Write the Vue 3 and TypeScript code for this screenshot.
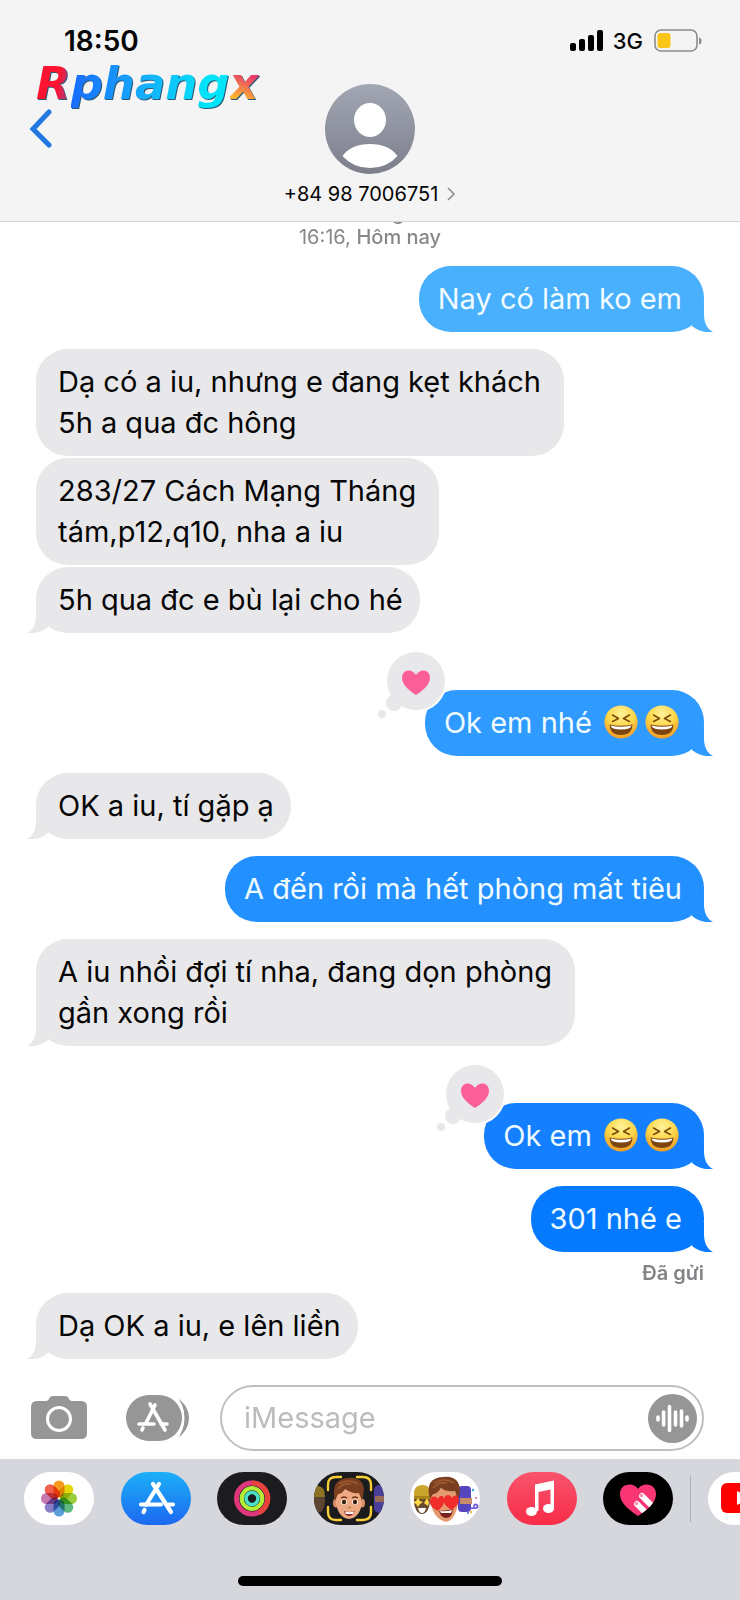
<script setup lang="ts">
import { ref } from 'vue'

interface Message {
  from: 'me' | 'them'
  lines: string[]
  tone?: string
  laughs?: number
  tail?: boolean
  loved?: boolean
  grouped?: boolean
  note?: string
}

const draft = ref('')

const messages: Message[] = [
  { from: 'me', lines: ['Nay có làm ko em'], tone: 'tone-1', tail: true },
  { from: 'them', lines: ['Dạ có a iu, nhưng e đang kẹt khách', '5h a qua đc hông'] },
  { from: 'them', lines: ['283/27 Cách Mạng Tháng', 'tám,p12,q10, nha a iu'], grouped: true },
  { from: 'them', lines: ['5h qua đc e bù lại cho hé'], grouped: true, tail: true },
  { from: 'me', lines: ['Ok em nhé '], laughs: 2, tone: 'tone-2', tail: true, loved: true },
  { from: 'them', lines: ['OK a iu, tí gặp ạ'], tail: true },
  { from: 'me', lines: ['A đến rồi mà hết phòng mất tiêu'], tone: 'tone-3', tail: true },
  { from: 'them', lines: ['A iu nhồi đợi tí nha, đang dọn phòng', 'gần xong rồi'], tail: true },
  { from: 'me', lines: ['Ok em '], laughs: 2, tone: 'tone-4', tail: true, loved: true },
  { from: 'me', lines: ['301 nhé e'], tone: 'tone-5', tail: true, note: 'Đã gửi' },
  { from: 'them', lines: ['Dạ OK a iu, e lên liền'], tail: true },
]

const petals = ['#f79a1c', '#e6d80c', '#9bcc3c', '#5cb87c', '#5a9fd8', '#8a7fc8', '#c878b0', '#f0604c']
</script>

<template>
  <div class="phone">
    <header class="top">
      <div class="status">
        <time class="clock">18:50</time>
        <div class="radio">
          <svg class="bars" viewBox="0 0 33 22" aria-hidden="true">
            <rect x="0" y="13" width="6" height="8" rx="2" />
            <rect x="9" y="9" width="6" height="12" rx="2" />
            <rect x="18" y="5" width="6" height="16" rx="2" />
            <rect x="27" y="0" width="6" height="21" rx="2" />
          </svg>
          <span class="network">3G</span>
          <svg class="battery" viewBox="0 0 48 24" aria-hidden="true">
            <rect x="1" y="1" width="42" height="21" rx="6" fill="none" stroke="#8b8b86" stroke-width="1.6" />
            <rect x="3.5" y="4" width="13" height="15" rx="3" fill="#fac515" />
            <path d="M45 8.5 Q47.5 9 47.5 12 Q47.5 15 45 15.5 Z" fill="#8b8b86" />
          </svg>
        </div>
      </div>
      <div class="watermark"><span class="w-red">R</span><span class="w-blue">phang</span><span class="w-sun">x</span></div>
      <div class="nav">
        <button class="back" type="button" aria-label="Back">
          <svg viewBox="0 0 24 40"><path d="M20 3 L4 20 L20 36" fill="none" stroke="#2078e0" stroke-width="5" stroke-linecap="round" stroke-linejoin="miter" /></svg>
        </button>
        <button class="contact" type="button">
          <svg class="avatar" viewBox="0 0 90 90" aria-hidden="true">
            <defs>
              <linearGradient id="avatarFill" x1="0" y1="0" x2="0" y2="1">
                <stop offset="0" stop-color="#a3a7b4" />
                <stop offset="1" stop-color="#7c7f8b" />
              </linearGradient>
            </defs>
            <circle cx="45" cy="45" r="45" fill="url(#avatarFill)" />
            <ellipse cx="45" cy="36" rx="16" ry="17" fill="#fff" />
            <path d="M17.5 72 Q26 60 45 60 Q64 60 72.5 72 Q62 84 45 84 Q28 84 17.5 72 Z" fill="#fff" />
          </svg>
          <span class="number">+84 98 7006751
            <svg viewBox="0 0 10 16" aria-hidden="true"><path d="M2 2 L8 8 L2 14" fill="none" stroke="#8d8d92" stroke-width="1.6" /></svg>
          </span>
        </button>
      </div>
    </header>

    <main class="thread">
      <p class="stamp"><b>iMessage</b><br />16:16, <b>Hôm nay</b></p>
      <div
        v-for="(m, i) in messages"
        :key="i"
        class="row"
        :class="[m.from, { grouped: m.grouped, loved: m.loved }]"
      >
        <div class="bubble" :class="[m.tone, { multi: m.lines.length > 1 }]">
          <span v-for="line in m.lines" :key="line" class="line">{{ line }}<svg
              v-for="n in m.laughs ?? 0"
              :key="n"
              class="laugh"
              viewBox="0 0 34 34"
              role="img"
              aria-label="laughing"
            >
              <defs>
                <radialGradient id="face" cx=".5" cy=".25" r=".8">
                  <stop offset="0" stop-color="#fff39a" />
                  <stop offset=".5" stop-color="#fdd648" />
                  <stop offset="1" stop-color="#ee9220" />
                </radialGradient>
              </defs>
              <circle cx="17" cy="17" r="16.6" fill="url(#face)" />
              <path d="M8.5 10 L14.5 13.5 L8.5 16.5 M25.5 10 L19.5 13.5 L25.5 16.5" fill="none" stroke="#7a4a08" stroke-width="1.5" stroke-linecap="round" stroke-linejoin="round" />
              <path d="M5.5 19.5 Q17 22 28.5 19.5 Q28 30 17 30 Q6 30 5.5 19.5 Z" fill="#7c4410" />
              <path d="M6.5 20.5 Q17 23 27.5 20.5 Q27 24.5 17 24.5 Q7 24.5 6.5 20.5 Z" fill="#fff" />
            </svg></span>
          <svg v-if="m.tail" class="tail" viewBox="0 0 24 30" aria-hidden="true">
            <path d="M5 0 H15 V12 C15 21 18 27 24 30 C17 31 9 29 3 24 Z" />
          </svg>
          <svg v-if="m.loved" class="tapback" viewBox="0 0 72 68" role="img" aria-label="loved">
            <circle cx="41" cy="31" r="31" fill="#fff" />
            <circle cx="41" cy="31" r="29" fill="#e8e8ea" />
            <circle cx="19" cy="53" r="8" fill="#e8e8ea" />
            <circle cx="7" cy="64" r="4" fill="#e8e8ea" />
            <path d="M41 45 C35 41 27 35 27 28 C27 19 37 18 41 25 C45 18 55 19 55 28 C55 35 47 41 41 45 Z" fill="#fb5f98" />
          </svg>
        </div>
        <small v-if="m.note" class="note">{{ m.note }}</small>
      </div>
    </main>

    <form class="composer" @submit.prevent>
      <button class="tool camera" type="button" aria-label="Camera">
        <svg viewBox="0 0 56 44">
          <path d="M6 5 H15 Q17 5 18 3 Q19 0 22 0 H34 Q37 0 38 3 Q39 5 41 5 H50 Q56 5 56 11 V37 Q56 43 50 43 H6 Q0 43 0 37 V11 Q0 5 6 5 Z" fill="#969696" />
          <circle cx="28" cy="23" r="11.5" fill="none" stroke="#fff" stroke-width="3" />
        </svg>
      </button>
      <button class="tool apps" type="button" aria-label="Apps">
        <svg viewBox="0 0 63 46">
          <rect width="56" height="46" rx="23" fill="#969696" />
          <path d="M50 2 Q58 10 58 23 Q58 36 50 44 Q63 36 63 23 Q63 10 50 2 Z" fill="#969696" />
          <path d="M49 1 Q57.5 10 57.5 23 Q57.5 36 49 45" fill="none" stroke="#fff" stroke-width="2" />
          <path d="M29 10 L20 28 M24 9 L39 35 M13 29 H28 M35 29 H41 M17 33 L16 35" fill="none" stroke="#fff" stroke-width="3.6" stroke-linecap="round" />
        </svg>
      </button>
      <div class="field">
        <input v-model="draft" type="text" placeholder="iMessage" aria-label="iMessage" />
        <button class="voice" type="button" aria-label="Audio message">
          <svg viewBox="0 0 49 49">
            <circle cx="24.5" cy="24.5" r="24.5" fill="#969696" />
            <path d="M10 23 V26 M15.6 18 V31 M21.5 12.5 V36.5 M27.5 18 V31 M33.5 17 V32 M39 23 V26" stroke="#fff" stroke-width="3.6" stroke-linecap="round" />
          </svg>
        </button>
      </div>
    </form>

    <footer class="drawer">
      <nav class="strip" aria-label="iMessage apps">
        <div class="pills">
          <button class="pill white" type="button" aria-label="Photos">
            <svg viewBox="0 0 70 53">
              <g class="petals">
                <rect
                  v-for="(c, i) in petals"
                  :key="c"
                  x="29.5"
                  y="8.5"
                  width="11"
                  height="17"
                  rx="5.5"
                  :fill="c"
                  :transform="`rotate(${i * 45} 35 26.5)`"
                />
              </g>
            </svg>
          </button>
          <button class="pill store" type="button" aria-label="App Store">
            <svg viewBox="0 0 70 53">
              <path d="M38 12 L25 33 M32 12 L50 40 M20 32.5 H40 M47 32.5 H52 M23.5 38 L22.5 40" fill="none" stroke="#fff" stroke-width="4.2" stroke-linecap="round" />
            </svg>
          </button>
          <button class="pill dark" type="button" aria-label="Activity">
            <svg viewBox="0 0 70 53" fill="none">
              <circle cx="35" cy="26.5" r="15.5" stroke="#e0367c" stroke-width="5" />
              <path d="M35 11 A15.5 15.5 0 0 1 42 40.5" stroke="#e9443c" stroke-width="5" />
              <circle cx="35" cy="26.5" r="10.3" stroke="#b4ec3a" stroke-width="4.2" />
              <circle cx="35" cy="26.5" r="6" stroke="#4ce0c8" stroke-width="3.6" />
            </svg>
          </button>
          <button class="pill dark" type="button" aria-label="Memoji">
            <svg viewBox="0 0 70 53">
              <ellipse cx="4" cy="29" rx="7" ry="12" fill="#5c4632" />
              <path d="M0 14 Q11 12 11 25 H0 Z" fill="#8a7424" />
              <rect x="60" y="13" width="14" height="28" rx="5" fill="#4b3f9c" />
              <rect x="61" y="24" width="10" height="6" fill="#9a6a58" />
              <path d="M14 18 V13 Q14 5 22 5 H27 M43 5 H49 Q57 5 57 13 V18 M57 35 V40 Q57 48 49 48 H43 M27 48 H22 Q14 48 14 40 V35" fill="none" stroke="#f6cf38" stroke-width="2.4" stroke-linecap="round" />
              <ellipse cx="22" cy="31" rx="3" ry="4.5" fill="#d88f66" /><ellipse cx="48" cy="31" rx="3" ry="4.5" fill="#d88f66" />
              <path d="M22 21 Q35 12 48 21 V32 Q45 46 35 47 Q25 46 22 32 Z" fill="#eda982" />
              <path d="M21 29 Q16 8 33 6 Q49 4 50 18 L48 29 L45 21 Q38 22 31 17 Q28 22 24 22 Z" fill="#7a3f20" />
              <path d="M25 12 Q34 6 44 12 M24 17 Q29 11 37 12" fill="none" stroke="#a05c30" stroke-width="1.5" />
              <ellipse cx="30" cy="30" rx="3" ry="2.6" fill="#fff" /><ellipse cx="41" cy="30" rx="3" ry="2.6" fill="#fff" />
              <circle cx="30" cy="30" r="2.2" fill="#38200f" /><circle cx="41" cy="30" r="2.2" fill="#38200f" />
              <path d="M27 26 Q30 24 33 26 M38 26 Q41 24 44 26" fill="none" stroke="#6b371c" stroke-width="1.5" />
              <path d="M34 35 Q35.5 36.5 37 35" fill="none" stroke="#c47850" stroke-width="1.2" />
              <path d="M30 39 Q35 41 41 39 Q39 44 35 44 Q31 44 30 39 Z" fill="#8f2f28" />
              <path d="M31 39.5 Q35 41 40 39.5 L39 42 H32 Z" fill="#fff" />
            </svg>
          </button>
          <button class="pill white" type="button" aria-label="Memoji stickers">
            <svg viewBox="0 0 70 53">
              <ellipse cx="12" cy="29" rx="8" ry="13" fill="#6a4a2c" />
              <path d="M4 24 Q3 13 13 13 Q21 13 21 24 Z" fill="#c9a52c" />
              <path d="M4 24 H21 V27 H4 Z" fill="#a98518" />
              <path d="M8 26 L10 29 L13 30 L10 32 L8 35 L6 32 L3 30 L6 29 Z M17 26 L19 30 L18 34 L14 31 Z" fill="#ffd94a" />
              <path d="M8 36 H16 Q15 41 12 41 Q9 41 8 36 Z" fill="#fff" />
              <rect x="48" y="14" width="13" height="26" rx="4" fill="#5546c0" />
              <rect x="50" y="26" width="12" height="6" fill="#c98c6a" />
              <path d="M60 36 Q70 37 67 33 Q64 31 64 35" fill="none" stroke="#6a57dc" stroke-width="1.8" />
              <circle cx="63" cy="18" r="1.2" fill="#36a6e8" /><circle cx="66" cy="26" r="1" fill="#e85a8c" /><circle cx="61" cy="40" r="1.2" fill="#f0b428" /><circle cx="58" cy="41" r="1" fill="#4a60e0" />
              <path d="M21 22 Q35 10 48 22 V32 Q45 48 36 50 Q24 47 21 32 Z" fill="#e59a70" />
              <path d="M20 27 Q14 6 33 5 Q50 3 50 20 L48 28 L45 19 Q36 20 31 16 Q27 22 23 22 Z" fill="#7a3f20" />
              <path d="M24 11 Q34 5 44 11 M23 16 Q28 10 37 11" fill="none" stroke="#a05c30" stroke-width="1.5" />
              <path d="M29 39 Q36 39 43 37 Q42 46 36 46 Q31 46 29 39 Z" fill="#7a211c" />
              <path d="M30 39 Q36 40 42 38 L41 41 H31 Z" fill="#fff" />
              <path d="M28 39 C22 36 19 32 20 28 C21 24 26 23 28 27 C30 22 35 24 34 29 C34 33 31 36 28 39 Z M42 38 C36 35 33 31 34 27 C35 22 40 22 42 26 C44 22 49 23 49 28 C49 32 45 35 42 38 Z" fill="#f02c2c" />
            </svg>
          </button>
          <button class="pill music" type="button" aria-label="Music">
            <svg viewBox="0 0 70 53" fill="#fff">
              <path d="M28 12.5 L47 8.5 V36 H43.5 V17.5 L31.5 20 V39 H28 Z" />
              <ellipse cx="24.5" cy="39.5" rx="5.5" ry="4.5" /><ellipse cx="41.5" cy="36.5" rx="5.5" ry="4.5" />
            </svg>
          </button>
          <button class="pill black" type="button" aria-label="Digital Touch">
            <svg viewBox="0 0 70 53">
              <defs>
                <clipPath id="heartClip"><path d="M35 44 C26 38 17 31 17 22 C17 11 31 10 35 17 C39 10 53 11 53 22 C53 31 44 38 35 44 Z" /></clipPath>
              </defs>
              <g clip-path="url(#heartClip)">
                <rect width="70" height="53" fill="#fa3573" />
                <path d="M39 24 L52 37 M34 32 L47 45" stroke="#fff" stroke-width="6" stroke-linecap="round" />
                <circle cx="38.5" cy="23.5" r="1.8" fill="#f991b4" /><circle cx="33.5" cy="31.5" r="1.8" fill="#f991b4" />
              </g>
            </svg>
          </button>
        </div>
        <span class="divider"></span>
        <div class="peek">
          <button class="pill white" type="button" aria-label="YouTube">
            <svg viewBox="0 0 70 53">
              <rect x="13" y="11" width="44" height="30" rx="6" fill="#fe0000" />
              <path d="M29 19 L43 26 L29 33 Z" fill="#fff" />
            </svg>
          </button>
        </div>
      </nav>
      <div class="home"></div>
    </footer>
  </div>
</template>

<style>
body {
  margin: 0;
  background: #fff;
}
</style>

<style scoped>
.phone {
  display: flex;
  flex-direction: column;
  min-height: 100vh;
  overflow: hidden;
  color: #060606;
  background: #fff;
  font-family: Inter, "Liberation Sans", sans-serif;
}

button {
  display: block;
  padding: 0;
  border: 0;
  color: inherit;
  background: none;
  font: inherit;
}

svg {
  display: block;
}

.top {
  position: relative;
  z-index: 1;
  box-sizing: border-box;
  height: 222px;
  padding-top: 24px;
  border-bottom: 1px solid #d2d2d4;
  background: #f4f4f4;
}

.status {
  display: flex;
  align-items: center;
  justify-content: space-between;
  height: 34px;
  padding: 0 38px 0 64px;
}

.clock {
  font-size: 28px;
  font-weight: 600;
}

.radio {
  display: flex;
  align-items: center;
}

.bars {
  width: 33px;
  height: 22px;
}

.network {
  margin: 0 11px 0 10px;
  font-size: 22px;
  font-weight: 500;
}

.battery {
  width: 48px;
  height: 24px;
}

.watermark {
  position: absolute;
  top: 56px;
  left: 36px;
  font: italic bold 45px/56px "DejaVu Sans", sans-serif;
  filter: drop-shadow(1px 1px 0 #2b5a78);
}

.watermark span {
  color: transparent;
  background-clip: text;
}

.watermark .w-red {
  background-image: linear-gradient(100deg, #fc1430 60%, #8c50a0);
}

.watermark .w-blue {
  background-image: linear-gradient(95deg, #1868ff, #14b4fa 50%, #00e4fa 85%);
}

.watermark .w-sun {
  background-image: linear-gradient(200deg, #e83c6c 35%, #fcb030 75%);
}

.nav {
  display: grid;
  grid-template-columns: 1fr auto 1fr;
  align-items: start;
  padding: 26px 29px 0;
}

.back {
  width: 24px;
  height: 40px;
  margin-top: 25px;
}

.contact {
  display: flex;
  flex-direction: column;
  align-items: center;
  gap: 8px;
}

.avatar {
  width: 90px;
  height: 90px;
}

.number {
  display: flex;
  align-items: center;
  gap: 8px;
  font-size: 20px;
  line-height: 24px;
}

.number svg {
  width: 10px;
  height: 16px;
}

.thread {
  flex: 1;
  padding: 0 36px;
}

.stamp {
  margin: -21px 0 0;
  color: #88888b;
  font-size: 20px;
  line-height: 24px;
  text-align: center;
}

.stamp b {
  font-weight: 500;
}

.row {
  display: flex;
  flex-direction: column;
  align-items: flex-start;
  margin-top: 17px;
}

.row.me {
  align-items: flex-end;
}

.row.grouped {
  margin-top: 2px;
}

.row.loved {
  margin-top: 57px;
}

.bubble {
  position: relative;
  padding: 12px 17px 13px 22px;
  border-radius: 32px;
  color: #060606;
  background: #e8e8ea;
  font-size: 29px;
  line-height: 41px;
}

.bubble.multi {
  padding-right: 23px;
}

.line {
  display: block;
  white-space: pre;
}

.me .bubble {
  padding-right: 22px;
  padding-left: 19px;
  color: #f0fbff;
}

.bubble.tone-1 { background: #48b0fd; }
.bubble.tone-2 { background: #2f9aff; }
.bubble.tone-3 { background: #2390ff; }
.bubble.tone-4 { background: #1480ff; }
.bubble.tone-5 { background: #067aff; }

.tail {
  position: absolute;
  bottom: 0;
  left: -9px;
  width: 24px;
  height: 30px;
  fill: #e8e8ea;
  transform: scaleX(-1);
}

.me .tail {
  right: -9px;
  left: auto;
  transform: none;
}

.tone-1 .tail { fill: #48b0fd; }
.tone-2 .tail { fill: #2f9aff; }
.tone-3 .tail { fill: #2390ff; }
.tone-4 .tail { fill: #1480ff; }
.tone-5 .tail { fill: #067aff; }

.tapback {
  position: absolute;
  top: -40px;
  left: -50px;
  width: 72px;
  height: 68px;
}

.laugh {
  display: inline-block;
  width: 34px;
  height: 34px;
  margin: 0 3px 0 4px;
  vertical-align: -6px;
}

.note {
  margin-top: 9px;
  color: #838387;
  font-size: 20px;
  font-weight: 600;
  line-height: 24px;
}

.row:has(.note) {
  margin-bottom: -9px;
}

.composer {
  display: flex;
  align-items: center;
  padding: 0 36px 8px 31px;
}

.camera,
.camera svg {
  width: 56px;
  height: 44px;
}

.apps,
.apps svg {
  width: 63px;
  height: 46px;
}

.apps {
  margin: 0 31px 0 39px;
}

.field {
  display: flex;
  flex: 1;
  align-items: center;
  box-sizing: border-box;
  min-width: 0;
  height: 66px;
  padding: 0 5px 0 22px;
  border: 2px solid #bfbfc1;
  border-radius: 33px;
}

.field input {
  flex: 1;
  min-width: 0;
  padding: 0;
  border: 0;
  outline: 0;
  color: #060606;
  background: none;
  font: 29px/40px Inter, "Liberation Sans", sans-serif;
}

.field input::placeholder {
  color: #bcbcbe;
  opacity: 1;
}

.voice,
.voice svg {
  width: 49px;
  height: 49px;
}

.drawer {
  display: flex;
  flex-direction: column;
  align-items: center;
  justify-content: space-between;
  box-sizing: border-box;
  height: 141px;
  padding: 13px 0 14px;
  background: #d5d7dc;
}

.strip {
  display: flex;
  align-items: center;
  gap: 17px;
  box-sizing: border-box;
  width: 100%;
  padding-left: 24px;
}

.pills {
  display: flex;
  flex: 1;
  justify-content: space-between;
}

.pill {
  flex: none;
  width: 70px;
  height: 53px;
  overflow: hidden;
  border-radius: 27px;
}

.pill svg {
  width: 70px;
  height: 53px;
}

.white { background: #fff; }
.dark { background: #1c1c1f; }
.black { background: #000; }
.store { background: linear-gradient(#1cb0f8, #1c68f0); }
.music { background: linear-gradient(#f8546c, #f82c48); }

.petals rect {
  mix-blend-mode: multiply;
}

.divider {
  width: 1px;
  height: 46px;
  background: #aeb0b6;
}

.peek {
  display: flex;
  width: 32px;
  overflow: hidden;
}

.home {
  width: 264px;
  height: 10px;
  border-radius: 5px;
  background: #000;
}
</style>
